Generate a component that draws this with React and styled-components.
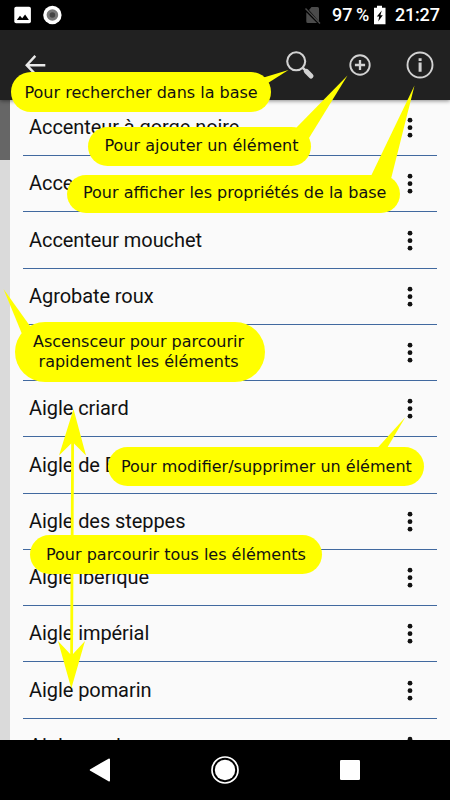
import React from 'react';
import styled, { createGlobalStyle } from 'styled-components';

const GlobalStyle = createGlobalStyle`
  * { box-sizing: border-box; }
  body { margin: 0; background: #000; }
`;

const Screen = styled.main`
  position: relative;
  display: flex;
  flex-direction: column;
  width: 450px;
  height: 800px;
  overflow: hidden;
  background: #fafafa;
  font-family: Roboto, sans-serif;
`;

const StatusBar = styled.header`
  display: flex;
  align-items: center;
  flex: 0 0 30px;
  height: 30px;
  padding: 0 10px 0 11px;
  background: #000;
  color: #fff;
  font-size: 18px;
  font-weight: 500;
  line-height: 30px;
  white-space: nowrap;
`;

const StatusIcon = styled.svg`
  display: block;
  flex: none;
  margin-left: ${(p) => p.$gap || 0}px;
`;

const StatusText = styled.span`
  flex: none;
  width: ${(p) => p.$width}px;
  margin-left: ${(p) => p.$gap}px;
  letter-spacing: ${(p) => p.$tracking || 0}px;
  word-spacing: ${(p) => p.$word || 0}px;
`;

const Spacer = styled.div`
  flex: 1;
`;

const AppBar = styled.nav`
  position: relative;
  display: flex;
  align-items: center;
  flex: 0 0 69.5px;
  padding: 0 15px 0 20px;
  background: #212121;
  box-shadow: 0 1px 4px rgba(0, 0, 0, 0.45);
`;

const IconButton = styled.button`
  display: flex;
  justify-content: center;
  width: 30px;
  height: 30px;
  margin: 0 0 0 ${(p) => p.$gap || 0}px;
  padding: 0;
  border: 0;
  background: none;
`;

const Content = styled.section`
  display: flex;
  flex: 1;
  min-height: 0;
`;

const ScrollTrack = styled.div`
  flex: 0 0 10px;
  background: #dadada;
`;

const ScrollThumb = styled.div`
  height: 60.5px;
  background: #666;
`;

const List = styled.ul`
  flex: 1;
  margin: 0;
  padding: 0.5px 13px 0 13px;
  overflow: hidden;
  list-style: none;
`;

const Row = styled.li`
  display: flex;
  align-items: center;
  justify-content: space-between;
  height: 56.25px;
  padding: 0 24px 0 6px;
  color: #111;
  font-size: 20px;
  white-space: nowrap;
  background: linear-gradient(#41699f, #41699f) 0 100% / 100% 1.2px no-repeat;
`;

const Label = styled.span`
  padding-bottom: 2px;
  line-height: 24px;
  letter-spacing: -0.07px;
`;

const NavBar = styled.footer`
  display: flex;
  align-items: center;
  flex: 0 0 60px;
  padding-left: 87px;
  background: #000;
`;

const NavIcon = styled.svg`
  display: block;
  flex: none;
  margin-left: ${(p) => p.$gap || 0}px;
`;

const Pointers = styled.svg`
  position: absolute;
  inset: 0;
  fill: #ff0;
`;

const Bubble = styled.aside`
  position: absolute;
  display: flex;
  align-items: center;
  justify-content: flex-start;
  left: ${(p) => p.$x}px;
  top: ${(p) => p.$y}px;
  width: ${(p) => p.$w}px;
  height: ${(p) => p.$h}px;
  padding-left: ${(p) => p.$pad}px;
  padding-top: ${(p) => p.$drop || 0}px;
  padding-bottom: ${(p) => p.$lift || 0}px;
  border-radius: 30px;
  background: #ff0;
  color: #111;
  font: 16px/20px 'DejaVu Sans', sans-serif;
  text-align: center;
  white-space: pre;
`;

const BIRDS = [
  'Accenteur à gorge noire',
  'Accenteur alpin',
  'Accenteur mouchet',
  'Agrobate roux',
  'Aigle botté',
  'Aigle criard',
  'Aigle de Bonelli',
  'Aigle des steppes',
  'Aigle ibérique',
  'Aigle impérial',
  'Aigle pomarin',
  'Aigle royal',
];

const HINTS = [
  { x: 11, y: 72, w: 260, h: 39.5, pad: 13.5, drop: 2, text: 'Pour rechercher dans la base' },
  { x: 88, y: 127, w: 223, h: 38.5, pad: 16.5, text: 'Pour ajouter un élément' },
  { x: 67, y: 175, w: 333, h: 37.5, pad: 16, lift: 2, text: 'Pour afficher les propriétés de la base' },
  { x: 15, y: 322, w: 250, h: 59.5, pad: 18, text: 'Ascensceur pour parcourir\nrapidement les éléments' },
  { x: 108, y: 447, w: 315.5, h: 39, pad: 13, text: 'Pour modifier/supprimer un élément' },
  { x: 30, y: 535, w: 291.5, h: 38.5, pad: 16, drop: 1.5, text: 'Pour parcourir tous les éléments' },
];

const MoreDots = () => (
  <svg width="6" height="22" viewBox="0 0 6 22" fill="#111">
    <circle cx="3" cy="3.2" r="2.4" />
    <circle cx="3" cy="10.7" r="2.4" />
    <circle cx="3" cy="18.2" r="2.4" />
  </svg>
);

export default function App() {
  return (
    <Screen>
      <GlobalStyle />
      <StatusBar>
        <StatusIcon $gap={3} width="18" height="18" viewBox="0 0 18 18">
          <rect x="0.3" y="0.8" width="16.6" height="16.5" rx="1.8" fill="#fff" />
          <path d="M2.8 14 6 9.8l2.2 2.4 2.9-3.6 3.8 5.4z" fill="#000" />
        </StatusIcon>
        <StatusIcon $gap={11} width="20" height="20" viewBox="0 0 20 20">
          <circle cx="9.4" cy="10" r="9.2" fill="#fff" />
          <circle cx="9.4" cy="10" r="5.8" fill="#777" />
          <circle cx="9.4" cy="10" r="2.8" fill="#444" />
        </StatusIcon>
        <Spacer />
        <StatusIcon width="18" height="20" viewBox="0 0 18 20">
          <path d="M6.5 2h6q1.500 0 1.500 1.500v13L4 5zM1.300 7.200 12 18H2.800q-1.500 0-1.500-1.500z" fill="#4b4b4b" />
          <path d="m.500 3.500 14.500 15" stroke="#4b4b4b" strokeWidth="1.400" />
        </StatusIcon>
        <StatusText $gap={9} $width={37} $word={-1}>97 %</StatusText>
        <StatusIcon $gap={4} width="14" height="20" viewBox="0 0 14 20">
          <path d="M4 .800h5v2h3.500v16.400H1V2.800h3z" fill="#fff" />
          <path d="M8.800 5.500 3.800 11.500h2.400l-1 5 4.600-6.300H7.400z" fill="#000" />
        </StatusIcon>
        <StatusText $gap={8} $width={45} $tracking={-0.2}>21:27</StatusText>
      </StatusBar>
      <AppBar>
        <IconButton aria-label="Retour">
          <svg width="30" height="30" viewBox="0 0 30 30" fill="none" stroke="#e9e9e9" strokeWidth="2.4">
            <path d="M25.300 15.200H7M15.300 5.900 6.700 15.200l8.600 9" />
          </svg>
        </IconButton>
        <Spacer />
        <IconButton aria-label="Rechercher">
          <svg width="30" height="30" viewBox="0 0 30 30" fill="none" stroke="#d2d2d2">
            <circle cx="11.200" cy="11.300" r="9" strokeWidth="2.100" />
            <path d="m17.600 17.600 3 3" strokeWidth="2.500" />
            <path d="m21.300 21.300 4.700 4.700" strokeWidth="5" strokeLinecap="round" />
          </svg>
        </IconButton>
        <IconButton $gap={30} aria-label="Ajouter">
          <svg width="30" height="30" viewBox="0 0 30 30" fill="none" stroke="#d2d2d2">
            <circle cx="15" cy="15" r="9.700" strokeWidth="1.900" />
            <path d="M9.900 15h10.200M15 9.900v10.200" strokeWidth="2.300" />
          </svg>
        </IconButton>
        <IconButton $gap={30} aria-label="Propriétés">
          <svg width="30" height="30" viewBox="0 0 30 30" fill="none" stroke="#d2d2d2">
            <circle cx="15" cy="15" r="12.500" strokeWidth="1.900" />
            <path d="M15.100 8.200v2.800M15.100 12.500v9.300" strokeWidth="3" />
          </svg>
        </IconButton>
      </AppBar>
      <Content>
        <ScrollTrack>
          <ScrollThumb />
        </ScrollTrack>
        <List>
          {BIRDS.map((bird) => (
            <Row key={bird}>
              <Label>{bird}</Label>
              <MoreDots />
            </Row>
          ))}
        </List>
      </Content>
      <NavBar>
        <NavIcon width="28" height="30" viewBox="0 0 28 30">
          <path d="M22 4.500 3.800 15 22 25.500z" fill="#fff" stroke="#fff" strokeWidth="2" strokeLinejoin="round" />
        </NavIcon>
        <NavIcon $gap={96} width="28" height="28" viewBox="0 0 28 28">
          <circle cx="14" cy="14" r="13" fill="none" stroke="#fff" strokeWidth="1.700" />
          <circle cx="14" cy="14" r="10.200" fill="#fff" />
        </NavIcon>
        <NavIcon $gap={101} width="20" height="20" viewBox="0 0 20 20">
          <rect width="20" height="20" rx="1.300" fill="#fff" />
        </NavIcon>
      </NavBar>
      <Pointers width="450" height="800" viewBox="0 0 450 800">
        <path d="M262 78 288.500 70 268 83 250 90z" />
        <path d="M296 128 347.500 75.500 309 138 290 150z" />
        <path d="M371 176 414.500 85.500 391 179 380 190z" />
        <path d="M3.500 289 30 326 38 345 22 334z" />
        <path d="M376.500 449 405.300 417.300 386.500 449z" />
        <path d="M73.500 409 86 455.500 74 443.500 73 654 85 641 71.300 688.500 58 641 70.200 654 71.200 443.500 59 455.500z" />
      </Pointers>
      {HINTS.map((hint) => (
        <Bubble key={hint.text} $x={hint.x} $y={hint.y} $w={hint.w} $h={hint.h} $pad={hint.pad} $drop={hint.drop} $lift={hint.lift}>
          {hint.text}
        </Bubble>
      ))}
    </Screen>
  );
}
